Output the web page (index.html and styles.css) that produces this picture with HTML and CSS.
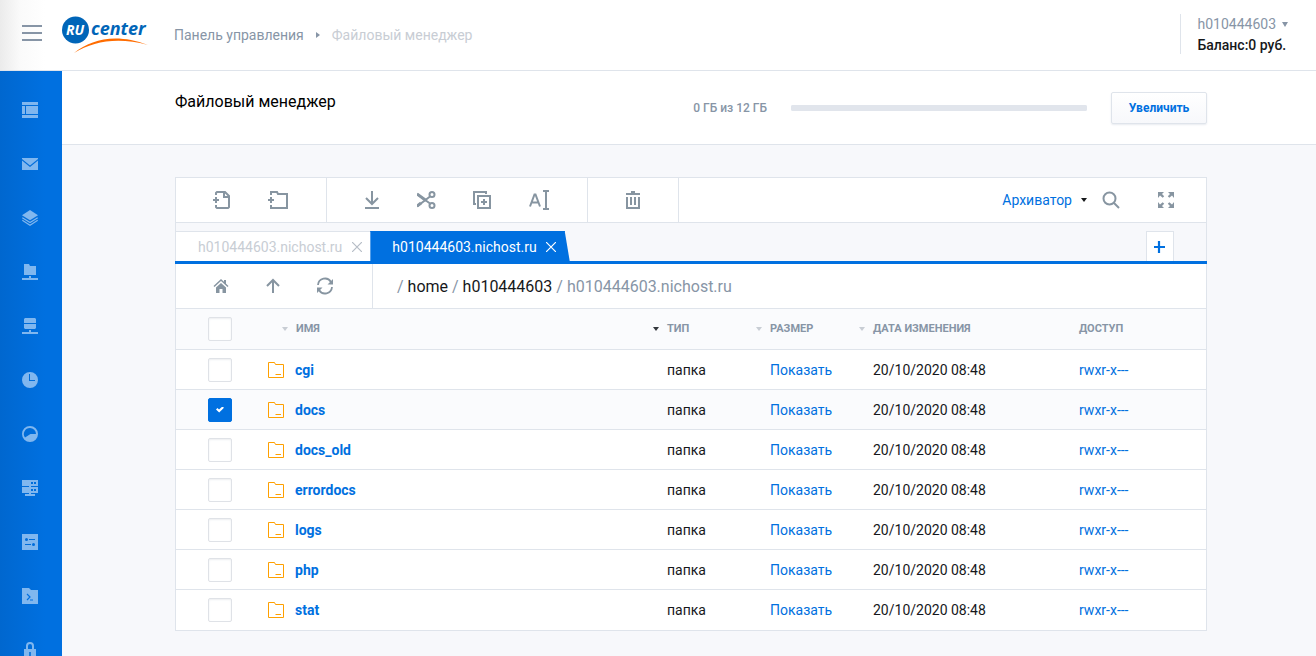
FILE: index.html
```html
<!DOCTYPE html>
<html lang="ru">
<head>
<meta charset="utf-8">
<title>Файловый менеджер</title>
<link rel="stylesheet" href="styles.css">
</head>
<body>
<header class="topbar">
  <button class="burger" aria-label="Меню"><svg width="20" height="16" viewBox="0 0 20 16"><path d="M0 1h20M0 8h20M0 15h20" stroke="#8795a6" stroke-width="2"/></svg></button>
  <a class="logo" href="#" aria-label="RU center">
    <svg width="88" height="38" viewBox="0 0 88 38">
      <circle cx="13.500" cy="14" r="13.500" fill="#0065b8"/>
      <text class="logo-ru" x="4" y="19">RU</text>
      <text class="logo-center" x="29" y="19">center</text>
      <path d="M12 37C30 23 54 17 86 29C56 21 32 25 12 37Z" fill="#ff6c00"/>
    </svg>
  </a>
  <nav class="crumbs">
    <a class="crumb" href="#">Панель управления</a>
    <svg width="4" height="6" viewBox="0 0 4 6"><path d="M0 0l4 3-4 3z" fill="#8795a6"/></svg>
    <span class="crumb-current">Файловый менеджер</span>
  </nav>
  <div class="account">
    <button class="account-name">h010444603<svg width="6" height="5" viewBox="0 0 6 5"><path d="M0 0h6L3 5z" fill="#8795a6"/></svg></button>
    <div class="balance">Баланс:0 руб.</div>
  </div>
</header>
<div class="layout">
  <nav class="sidebar">
    <a href="#" aria-label="Обзор"><svg viewBox="0 0 16 16"><path d="M0 0h16v3H0zM0 4h3v8H0zM4 4h12v8H4zM0 13h16v3H0z"/></svg></a>
    <a href="#" aria-label="Почта"><svg viewBox="0 0 16 16"><path d="M0 2h16v1L8 9.500 0 3zM0 4.500L8 11l8-6.500V14H0z"/></svg></a>
    <a href="#" aria-label="Сайты"><svg viewBox="0 0 16 16"><path d="M8 0l8 5.200-8 5-8-5z"/><path class="line" d="M.3 7.700L8 12.500l7.700-4.800M.3 10.300L8 15.200l7.700-4.900"/></svg></a>
    <a href="#" aria-label="FTP"><svg viewBox="0 0 16 16"><path d="M2 0h5l1 2h6v9H2zM7 12h2v2h7v2H0v-2h7z"/></svg></a>
    <a href="#" aria-label="Базы данных"><svg viewBox="0 0 16 16"><path d="M3 0h10l1 1v4H2V1zM2 6h12v4l-1 1H3l-1-1zM7 12h2v2h7v2H0v-2h7z"/></svg></a>
    <a href="#" aria-label="Планировщик"><svg viewBox="0 0 16 16"><path fill-rule="evenodd" d="M8 0a8 8 0 110 16A8 8 0 018 0zM7 2v7h6V8H8V2z"/></svg></a>
    <a href="#" aria-label="Нагрузка"><svg viewBox="0 0 16 16"><path fill-rule="evenodd" d="M8 0a8 8 0 110 16A8 8 0 018 0zM8 2a6 6 0 00-5 9.500L8.500 8H14a6 6 0 00-6-6z"/></svg></a>
    <a href="#" aria-label="Сервер"><svg viewBox="0 0 16 16"><path fill-rule="evenodd" d="M0 0h16v6H0zM9 2v2h2V2zM12 2v2h2V2zM7 6h2v1H7zM0 7h16v6H0zM9 9v2h2V9zM12 9v2h2V9zM7 13h2v1h4v2H3v-2h4z"/></svg></a>
    <a href="#" aria-label="Настройки"><svg viewBox="0 0 16 16"><path fill-rule="evenodd" d="M0 0h16v16H0zM4.500 4a1.500 1.500 0 100 3 1.500 1.500 0 000-3zM7 5v1h6V5zM3 10v1h6v-1zM11.500 9a1.500 1.500 0 100 3 1.500 1.500 0 000-3z"/></svg></a>
    <a href="#" aria-label="Терминал"><svg viewBox="0 0 16 16"><path d="M0 0h7l2 2h7v14H0z"/><path d="M5 6l3 3-3 3M8 12h3" fill="none" stroke="#0070e0" stroke-width="1.200"/></svg></a>
    <a href="#" aria-label="Безопасность"><svg viewBox="0 0 16 16"><path fill-rule="evenodd" d="M4 7V4a4 4 0 018 0v3h2v9H2V7zM6 7h4V4a2 2 0 00-4 0zM7.200 10v6h1.600v-6z"/></svg></a>
  </nav>
  <main class="main">
    <section class="page-head">
      <h1 class="title">Файловый менеджер</h1>
      <div class="quota">
        <label class="quota-text" for="quota">0 ГБ из 12 ГБ</label>
        <progress class="quota-bar" id="quota" value="0" max="12"></progress>
        <button class="enlarge">Увеличить</button>
      </div>
    </section>
    <section class="manager">
      <div class="toolbar">
        <div class="tools tools-new">
          <button aria-label="Новый файл"><svg viewBox="0 0 20 20"><path d="M4 5V3l1-1h8l4 4v11l-1 1H5l-1-1v-2M12 2v5h5M1 10h6M4 7v6"/></svg></button>
          <button aria-label="Новая папка"><svg viewBox="0 0 20 20"><path d="M3 5V2h6l1 2h9v14H3v-3M0 10h6M3 7v6"/></svg></button>
        </div>
        <div class="tools tools-edit">
          <button aria-label="Скачать"><svg viewBox="0 0 20 20"><path d="M10 1v13M4 8l6 6 6-6M3 18h14"/></svg></button>
          <button aria-label="Вырезать"><svg viewBox="0 0 20 20"><path d="M0 4l13 9.500M13 6.500L0 16.500"/><path d="M0 4l9 6.500M0 16l4-3" stroke-width="3"/><circle cx="15" cy="4.500" r="2.500"/><circle cx="15" cy="15.500" r="2.500"/></svg></button>
          <button aria-label="Копировать"><svg viewBox="0 0 20 20"><path d="M4 14H2V2h12v2M6 6h12v12H6zM9 12h6M12 9v6"/></svg></button>
          <button class="wide" aria-label="Переименовать"><svg viewBox="0 0 22 20"><path d="M1 16.500L5.500 4.500h1L11 16.500M3 12.500h6.500M14 1h2.500l.5 1 .5-1H20M14 19h2.500l.5-1 .5 1H20M17 2v16"/></svg></button>
        </div>
        <div class="tools">
          <button aria-label="Удалить"><svg viewBox="0 0 20 20"><path d="M3 4h14M8 2h4M4 7v11h12V7M8 7v8M12 7v8"/></svg></button>
        </div>
        <div class="tools-end">
          <button class="archiver">Архиватор<svg width="6" height="4" viewBox="0 0 6 4"><path d="M0 0h6L3 4z"/></svg></button>
          <button class="search" aria-label="Поиск"><svg viewBox="0 0 18 18"><circle cx="7.500" cy="7.500" r="6"/><path d="M12 12l5 5"/></svg></button>
          <button class="expand" aria-label="На весь экран"><svg viewBox="0 0 18 18"><path class="solid" d="M1 1h6L5 3l2.200 2.200-1.500 1.500L3 4.500 1 7zM17 1v6l-2-2.500-2.700 2.200-1.500-1.500L13 3l-2-2zM1 17v-6l2 2.500 2.700-2.200 1.500 1.500L5 15l2 2zM17 17h-6l2-2-2.200-2.200 1.500-1.500L15 13.500l2-2.500z"/></svg></button>
        </div>
      </div>
      <div class="tabs">
        <div class="tab"><span>h010444603.nichost.ru</span><button aria-label="Закрыть"><svg width="10" height="10" viewBox="0 0 10 10"><path d="M0 0l10 10M10 0L0 10"/></svg></button></div>
        <div class="tab tab-active"><span>h010444603.nichost.ru</span><button aria-label="Закрыть"><svg width="10" height="10" viewBox="0 0 10 10"><path d="M0 0l10 10M10 0L0 10"/></svg></button></div>
        <button class="tab-add" aria-label="Новая вкладка"><svg width="12" height="12" viewBox="0 0 12 12"><path d="M5 0v12M0 6h11" stroke="#0070e0" stroke-width="2.200"/></svg></button>
      </div>
      <div class="pathbar">
        <div class="nav-tools">
          <button aria-label="Домой"><svg viewBox="0 0 18 18"><path d="M2 9.500L9 3l7 6.500" stroke-width="1.500"/><path class="solid" d="M4 10.500L9 6l5 4.500V16h-3.500v-4h-3v4H4z"/><path class="solid" d="M12 3h2v4h-2z"/></svg></button>
          <button aria-label="Вверх"><svg viewBox="0 0 18 18"><path d="M9 16V3M3 9l6-6 6 6"/></svg></button>
          <button aria-label="Обновить"><svg viewBox="0 0 18 18"><path d="M2 8A7 7 0 0115 5M16 10A7 7 0 013 13" stroke-width="1.800"/><path class="solid" d="M17 2v5.500h-5.500zM1 16v-5.500h5.500z"/></svg></button>
        </div>
        <div class="path"><span class="sep">/</span> <a href="#">home</a> <span class="sep">/</span> <a href="#">h010444603</a> <span class="sep">/</span> <span class="here">h010444603.nichost.ru</span></div>
      </div>
      <table class="files">
        <colgroup><col class="c-check"><col><col class="c-type"><col class="c-size"><col class="c-date"><col class="c-access"></colgroup>
        <thead><tr>
          <th><input type="checkbox" aria-label="Выбрать все"></th>
          <th class="th-name"><button class="sort">Имя</button></th>
          <th><button class="sort shifted sorted">Тип</button></th>
          <th><button class="sort shifted">Размер</button></th>
          <th><button class="sort shifted">Дата изменения</button></th>
          <th>Доступ</th>
        </tr></thead>
        <tbody id="rows"></tbody>
      </table>
    </section>
  </main>
</div>
<script src="files.js"></script>
</body>
</html>
```
FILE: files.js
```js
const folders = ["cgi", "docs", "docs_old", "errordocs", "logs", "php", "stat"];
const selected = "docs";

document.getElementById("rows").innerHTML = folders.map(name => `
  <tr class="${name === selected ? "selected" : ""}">
    <td><input type="checkbox" aria-label="${name}" ${name === selected ? "checked" : ""}></td>
    <td><a class="file" href="#"><svg width="17" height="16" viewBox="0 0 17 16"><path d="M.5.500h6l1 2h8v13H.5zM7.500 12.500h5.500" fill="none" stroke="#ffa000"/></svg>${name}</a></td>
    <td>папка</td>
    <td><a class="link" href="#">Показать</a></td>
    <td>20/10/2020 08:48</td>
    <td><a class="link access" href="#">rwxr-x---</a></td>
  </tr>`).join("");
```
FILE: styles.css
```css
* { box-sizing: border-box; }
body {
  margin: 0;
  height: 100vh;
  overflow: hidden;
  display: flex;
  flex-direction: column;
  background: #f7f8fb;
  color: #16181b;
  font: 14px/20px Roboto, sans-serif;
}
button {
  padding: 0;
  border: 0;
  background: none;
  color: inherit;
  font: inherit;
  cursor: pointer;
}
a { color: inherit; text-decoration: none; }
svg { display: block; flex: none; }

.topbar {
  flex: none;
  display: flex;
  align-items: center;
  height: 71px;
  padding: 0 28px 0 22px;
  border-bottom: 1px solid #dfe4eb;
  background: linear-gradient(90deg, #ebebeb, #fafafa 20px, #fff 45px);
}
.burger { margin: 0 20px 4px 0; }
.logo { margin-right: 24px; }
.logo text { font-family: "Open Sans", sans-serif; font-style: italic; font-weight: 700; }
.logo-ru { fill: #fff; font-size: 14px; }
.logo-center { fill: #0065b8; font-size: 18px; }
.crumbs { display: flex; align-items: center; gap: 12px; color: #8795a6; }
.crumb-current { color: #c8cdd4; }
.account {
  margin-left: auto;
  padding-left: 16px;
  height: 40px;
  margin-bottom: 2px;
  border-left: 1px solid #dfe4eb;
}
.account-name { display: flex; align-items: center; gap: 6px; color: #8795a6; }
.balance { padding-top: 1px; font-weight: 500; }

.layout { flex: 1; min-height: 0; display: flex; }
.sidebar {
  flex: none;
  width: 62px;
  padding: 31px 0 0 22px;
  overflow: hidden;
  background: linear-gradient(90deg, #0067cf, #0070e0 45px);
}
.sidebar a { display: block; margin-bottom: 38px; }
.sidebar svg { width: 16px; height: 16px; fill: #80b7ef; }
.sidebar .line { fill: none; stroke: #80b7ef; stroke-width: 1.2; }
.main { flex: 1; min-width: 0; }

.page-head {
  display: flex;
  justify-content: space-between;
  height: 74px;
  padding: 21px 109px 0 113px;
  border-bottom: 1px solid #dfe4eb;
  background: #fff;
}
.title { margin: 0; font-size: 16px; font-weight: 400; color: #000; }
.quota { display: flex; align-items: center; gap: 24px; height: 32px; }
.quota-text { font-size: 12px; font-weight: 500; color: #8795a6; }
.quota-bar {
  appearance: none;
  width: 296px;
  height: 6px;
  border: 0;
  border-radius: 2px;
  background: #e1e5ec;
}
.quota-bar::-webkit-progress-bar { border-radius: 2px; background: #e1e5ec; }
.enlarge {
  width: 96px;
  height: 32px;
  border: 1px solid #dfe4eb;
  border-radius: 2px;
  background: linear-gradient(#fff, #f7f8fb);
  box-shadow: 0 1px 2px #e8ebf0;
  color: #0070e0;
  font-size: 12px;
  font-weight: 700;
}

.manager {
  margin: 32px 109px 0 113px;
  border: 1px solid #dfe4eb;
  background: #fff;
}
.toolbar { display: flex; height: 45px; border-bottom: 1px solid #dfe4eb; }
.tools {
  display: flex;
  align-items: center;
  gap: 35px;
  padding: 0 35px;
  border-right: 1px solid #dfe4eb;
}
.tools-new { gap: 36px; padding: 0 38px 0 36px; }
.tools-edit { padding-right: 36px; }
.manager svg { fill: none; }
.toolbar svg, .nav-tools svg { stroke: #8795a1; stroke-width: 2; }
.tools svg { width: 20px; height: 20px; }
.tools .wide { padding-left: 2px; }
.tools .wide svg { width: 22px; }
.manager .solid { fill: #8795a1; stroke: none; }
.tools-end { display: flex; align-items: center; margin-left: auto; padding-right: 31px; }
.archiver { display: flex; align-items: center; gap: 9px; color: #0070e0; }
.manager .archiver svg { fill: #16181b; stroke: none; }
.search { margin: 0 37px 0 15px; }
.search svg, .expand svg { width: 18px; height: 18px; }

.tabs {
  display: flex;
  height: 41px;
  margin: 0 -1px;
  padding: 8px 33px 0 1px;
  border-bottom: 3px solid #0070e0;
  background: #f7f8fb;
  box-shadow: inset 1px 0 #dfe4eb, inset -1px 0 #dfe4eb;
}
.tab {
  display: flex;
  align-items: center;
  gap: 10px;
  padding: 0 8px 0 22px;
  border-top: 1px solid #dfe4eb;
  background: #fff;
  color: #c8cdd4;
}
.tab svg { stroke: #b6bdc6; stroke-width: 1.2; }
.tab-active {
  gap: 9px;
  padding-right: 14px;
  border-color: #0070e0;
  background: #0070e0;
  color: #fff;
  clip-path: polygon(0 0, calc(100% - 5px) 0, 100% 100%, 0 100%);
}
.tab-active svg { stroke: #fff; }
.tab-add {
  display: flex;
  align-items: center;
  justify-content: center;
  width: 28px;
  margin-left: auto;
  border: 1px solid #dfe4eb;
  border-bottom: 0;
  background: #fff;
}

.pathbar { display: flex; height: 45px; border-bottom: 1px solid #dfe4eb; font-size: 16px; }
.nav-tools {
  display: flex;
  align-items: center;
  gap: 34px;
  width: 197px;
  padding-left: 36px;
  border-right: 1px solid #dfe4eb;
}
.nav-tools svg { width: 18px; height: 18px; }
.path { padding: 13px 24px 11px; }
.sep, .here { color: #8795a6; }

.files { width: 100%; border-collapse: separate; border-spacing: 0; table-layout: fixed; }
.c-check { width: 92px; }
.c-type, .c-size { width: 10%; }
.c-date { width: 20%; }
.c-access { width: 127px; }
.files th, .files td { height: 40px; padding: 0; text-align: left; border-bottom: 1px solid #dfe4eb; }
.files th:first-child, .files td:first-child { padding-left: 32px; }
.files th {
  height: 41px;
  background: #fafbfd;
  color: #8795a6;
  font-size: 11px;
  font-weight: 700;
  text-transform: uppercase;
}
.files .th-name { padding-left: 14px; }
.files tbody tr:last-child td { border-bottom: 0; }
.selected { background: #fafbfd; }
.sort { display: flex; align-items: center; gap: 8px; text-transform: inherit; }
.sort::before {
  content: "";
  width: 6px;
  height: 4px;
  background: #c8cdd4;
  clip-path: polygon(0 0, 100% 0, 50% 100%);
}
.shifted { margin-left: -14px; }
.sorted::before { background: #33373c; }
input[type="checkbox"] {
  appearance: none;
  display: grid;
  place-items: center;
  width: 24px;
  height: 24px;
  margin: 0;
  border: 1px solid #dfe2e7;
  border-radius: 2px;
  background: #fff;
  box-shadow: inset 0 1px 2px #eceef1;
}
input[type="checkbox"]:checked { border-color: #0070e0; background: #0070e0; box-shadow: none; }
input[type="checkbox"]:checked::before {
  content: "";
  width: 8px;
  height: 6px;
  background: #fff;
  clip-path: polygon(0 50%, 18% 25%, 38% 50%, 80% 0, 100% 20%, 40% 100%);
}
.file { display: flex; align-items: center; gap: 10px; color: #0070e0; font-weight: 700; }
.link { color: #0070e0; }
```
